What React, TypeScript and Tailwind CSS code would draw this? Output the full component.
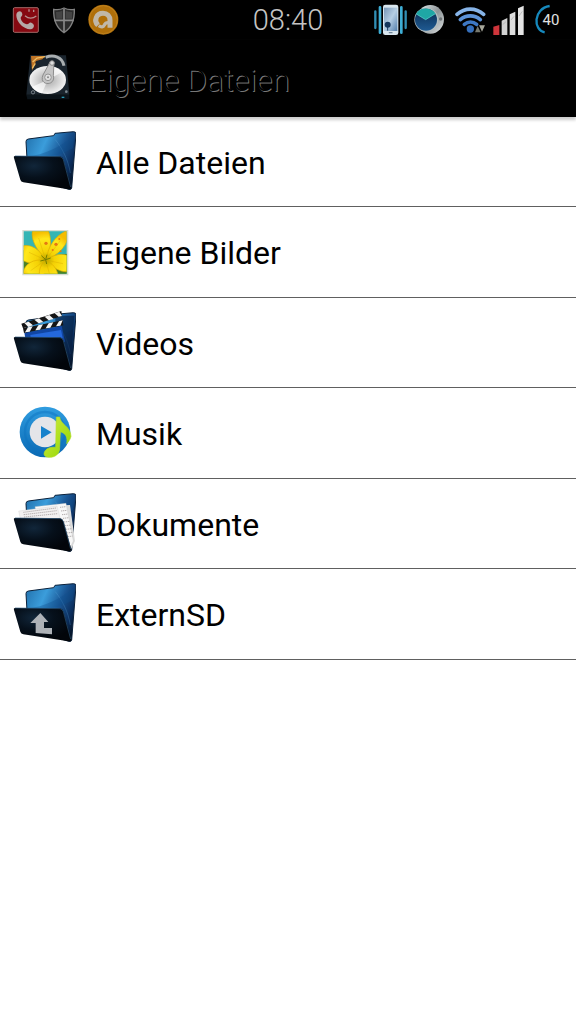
import type { ReactNode } from "react";

function StatusBar() {
  return (
    <div className="grid h-10 grid-cols-[1fr_auto_1fr] items-center bg-black px-3">
      <div className="flex items-center gap-3 opacity-80">
        <CallIcon />
        <ShieldIcon />
        <AvastIcon />
      </div>
      <time className="text-[29px] leading-10 font-light text-[#c4c4c4]">
        08:40
      </time>
      <div className="flex items-center justify-end gap-1.5">
        <VibrateIcon />
        <WatchIcon />
        <WifiIcon />
        <SignalIcon />
        <BatteryIcon />
      </div>
    </div>
  );
}

function CallIcon() {
  return (
    <svg viewBox="36 0 84 120" className="h-10 w-7" aria-hidden="true">
      <rect x="40" y="23" width="75" height="74" rx="4" fill="#a80c16" stroke="#c98280" strokeWidth="3" />
      <path
        d="M53 36c7-5 13-1 14 7 1 5-5 7-5 11 1 9 10 18 19 19 5 0 7-7 13-5 8 3 10 9 6 15-5 6-14 6-24 1C62 77 50 62 49 47c0-5 1-8 4-11Z"
        fill="#e3d2d0"
      />
      <path d="M75 47c10 9 23 9 34 1M87 28v7M101 29v7" fill="none" stroke="#e3b5b2" strokeWidth="4" />
    </svg>
  );
}

function ShieldIcon() {
  return (
    <svg viewBox="156 0 72 120" className="h-10 w-6" aria-hidden="true">
      <path
        d="M192 24c-10 5-21 6-31 4-1 34 8 56 31 70 23-14 32-36 31-70-10 2-21 1-31-4Z"
        fill="#373737"
        stroke="#a2a2a2"
        strokeWidth="4"
      />
      <path d="M192 26v70M163 61h58" stroke="#aaa" strokeWidth="5" />
      <path d="M168 36q10 0 19-4v24h-18ZM197 32q9 4 19 4v20h-19Z" fill="#555" />
    </svg>
  );
}

function AvastIcon() {
  return (
    <svg viewBox="262 0 93 120" className="h-10 w-[31px]" aria-hidden="true">
      <circle cx="308" cy="59" r="45" fill="#dc8b0c" />
      <circle cx="308" cy="59" r="42" fill="none" stroke="#eda126" strokeWidth="3" />
      <path
        d="M292 76c-14-14-5-36 15-36 13 0 21 9 21 21v22"
        fill="none"
        stroke="#f1e5d2"
        strokeWidth="15"
      />
      <path d="M294 77q12 8 17-2 3-7 12-7" fill="none" stroke="#f1e5d2" strokeWidth="10" />
    </svg>
  );
}

function VibrateIcon() {
  return (
    <svg viewBox="18 0 108 120" className="h-10 w-9" aria-hidden="true">
      <defs>
        <linearGradient id="phoneScreen" x1="0" y1="0" x2="1" y2="1">
          <stop offset="0" stopColor="#7896b7" />
          <stop offset=".5" stopColor="#b5cee4" />
          <stop offset="1" stopColor="#547fac" />
        </linearGradient>
      </defs>
      <path d="M28 34v50M119 34v50" stroke="#318eb4" strokeWidth="7" strokeLinecap="round" />
      <path d="M42 22v76M106 22v76" stroke="#3eaed5" strokeWidth="8" strokeLinecap="round" />
      <rect x="51" y="14" width="46" height="91" rx="7" fill="#d9e6ef" />
      <rect x="54" y="23" width="40" height="70" fill="url(#phoneScreen)" />
      <circle cx="65" cy="74" r="9" fill="#15365d" />
      <path d="M65 78v14" stroke="#15365d" strokeWidth="3" />
      <rect x="68" y="96" width="12" height="4" rx="2" fill="#71869a" />
    </svg>
  );
}

function WatchIcon() {
  return (
    <svg viewBox="146 0 102 120" className="h-10 w-[34px]" aria-hidden="true">
      <defs>
        <linearGradient id="watchFrame" x1="0" y1="0" x2="1" y2="1">
          <stop offset="0" stopColor="#e8f0f1" />
          <stop offset=".5" stopColor="#8d9497" />
          <stop offset="1" stopColor="#dfe3e4" />
        </linearGradient>
        <linearGradient id="watchFace" x1="0" y1="0" x2="0" y2="1">
          <stop offset="0" stopColor="#0a2c50" />
          <stop offset="1" stopColor="#1f5a92" />
        </linearGradient>
      </defs>
      <ellipse cx="195" cy="58" rx="41" ry="43" fill="url(#watchFrame)" />
      <circle cx="183" cy="59" r="36" fill="#b4bfc2" />
      <circle cx="182" cy="59" r="33" fill="url(#watchFace)" />
      <path d="M181 59 152 42c12-21 42-22 59-1Z" fill="#1fa7a5" />
      <path d="m153 42 28 17 29-18" fill="none" stroke="#5fd3cf" strokeWidth="2" />
      <circle cx="226" cy="57" r="5" fill="#6d7376" />
    </svg>
  );
}

function WifiIcon() {
  return (
    <svg viewBox="24 0 96 120" className="h-10 w-8" aria-hidden="true">
      <g fill="none" strokeLinecap="round" strokeWidth="11">
        <path d="M33 43c24-21 56-21 80 0" stroke="#86b3e7" />
        <path d="M43 59c18-15 42-15 60 0" stroke="#5c92d7" />
        <path d="M55 73c11-9 26-9 37 0" stroke="#3e78c4" />
      </g>
      <circle cx="73" cy="87" r="11" fill="#356fbc" />
      <path d="m87 97 8-19 9 19Z" fill="#77796f" />
      <path d="m99 76 9 19 9-19Z" fill="#a7a79b" />
    </svg>
  );
}

function SignalIcon() {
  return (
    <svg viewBox="137 0 102 120" className="h-10 w-[34px]" aria-hidden="true">
      <path d="m141 80 18-5v30h-18Z" fill="#cf353b" />
      <path d="m166 62 17-8v51h-17Z" fill="#d3d3d3" />
      <path d="m190 43 17-8v70h-17Z" fill="#dedede" />
      <path d="m215 25 17-8v88h-17Z" fill="#e4e4e4" />
      <path d="m169 74 10-9M194 60l9-11M218 48l10-14" stroke="#aaa" strokeWidth="2" />
    </svg>
  );
}

function BatteryIcon() {
  return (
    <svg viewBox="258 0 96 120" className="h-10 w-8" role="img">
      <path d="M311 18c-50 8-50 72-15 79" fill="none" stroke="#1689bd" strokeWidth="7" />
      <text x="315" y="76" textAnchor="middle" fontSize="45" fill="#e2e2e2">
        40
      </text>
    </svg>
  );
}

function DriveIcon() {
  return (
    <svg viewBox="72 33 144 168" className="h-14 w-12" aria-hidden="true">
      <defs>
        <radialGradient id="platter">
          <stop offset="0" stopColor="#aaa" />
          <stop offset=".45" stopColor="#c8c8c8" />
          <stop offset="1" stopColor="#f2f2f2" />
        </radialGradient>
      </defs>
      <path d="m91 45 107 1 10 118H79Z" fill="#1a242d" />
      <path d="M79 165h129v13H82Z" fill="#0b1319" />
      <path d="M93 48h43l-9 10-19 5-12 29Z" fill="#bf7426" />
      <path d="m98 66 13-12 24-4M97 85l9-15" stroke="#efbd64" strokeWidth="4" fill="none" />
      <path d="M137 52c24-9 50-1 55 25" stroke="#a9aeb0" strokeWidth="9" fill="none" />
      <ellipse cx="143" cy="120" rx="55" ry="42" fill="url(#platter)" />
      <path d="m143 120-46 20q11 18 29 20ZM143 120l42-23q-9-13-24-17Z" fill="#fff" opacity=".65" />
      <path d="m150 66-21 39c-14 34 40 34 31 1L162 66Z" fill="#c4c4c4" stroke="#8d8d8d" strokeWidth="3" />
      <circle cx="156" cy="69" r="7" fill="#ddd" stroke="#888" strokeWidth="3" />
      <circle cx="144" cy="112" r="10" fill="#e0e0e0" stroke="#959595" strokeWidth="3" />
      <circle cx="144" cy="112" r="3" fill="#888" />
      <circle cx="99" cy="157" r="5" fill="none" stroke="#a4acb2" strokeWidth="2" />
      <circle cx="199" cy="155" r="4" fill="#7c8991" />
      <path d="M185 172h8" stroke="#269bb8" strokeWidth="4" />
    </svg>
  );
}

function FolderGradients() {
  return (
    <svg className="absolute h-0 w-0" aria-hidden="true">
      <defs>
        <linearGradient id="folderBack" x1="0" y1=".2" x2="1" y2=".7">
          <stop offset="0" stopColor="#2678b4" />
          <stop offset=".3" stopColor="#3b9ddb" />
          <stop offset=".6" stopColor="#1a5796" />
          <stop offset=".85" stopColor="#0b2d5c" />
          <stop offset="1" stopColor="#051327" />
        </linearGradient>
        <radialGradient id="folderFront" cx=".35" cy=".3" r=".7">
          <stop offset="0" stopColor="#11263a" />
          <stop offset=".5" stopColor="#06101b" />
          <stop offset="1" stopColor="#02050a" />
        </radialGradient>
      </defs>
    </svg>
  );
}

function Folder({ children, overlay }: { children?: ReactNode; overlay?: ReactNode }) {
  return (
    <svg viewBox="36 31 192 192" className="h-16 w-16 shrink-0" aria-hidden="true">
      <path
        d="M78 66q0-7 7-8l76-10 4-7 56-5q7 0 7 7l-13 162q-1 6-9 4L84 170Z"
        fill="url(#folderBack)"
        stroke="#0a203a"
        strokeWidth="3"
      />
      <path d="M166 60c21 27 38 58 45 100" fill="none" stroke="#5fa8d9" strokeWidth="2" opacity=".4" />
      <path d="M83 110c51-5 91-25 139-61l-3 36c-44 26-77 30-136 25Z" fill="#0f4f90" opacity=".35" />
      {children}
      <path
        d="m44 109 136 1q8 1 11 10l23 83q-1 7-9 6L70 188q-7-1-9-8L42 115q-2-5 2-6Z"
        fill="url(#folderFront)"
      />
      <path d="m45 109 135 2q7 1 10 9l22 82" fill="none" stroke="#2b567c" strokeWidth="2" />
      {overlay}
    </svg>
  );
}

function VideoFolder() {
  return (
    <Folder>
      <path d="M165 45h58l-13 158-40-90Z" fill="#071d3c" opacity=".6" />
      <path d="m73 96 112-20 10 47H78Z" fill="#1146a4" />
      <path d="m91 103 92-15 6 29H93Z" fill="#2468dc" />
      <path d="m64 69 120-38 2 15L69 83ZM69 83l119-24 2 15-118 23Z" fill="#151515" />
      <path
        d="m73 67 13-4 13 11-14 5Zm30-10 14-4 13 11-14 4Zm31-9 14-5 13 12-15 4Zm30-10 14-5 8 13-10 2ZM75 95l9-15 14-3-9 16Zm31-6 9-15 14-3-9 16Zm31-6 9-15 14-3-9 16Zm31-6 9-15 11-3-7 16Z"
        fill="#f4f4f4"
      />
    </Folder>
  );
}

function DocumentFolder() {
  return (
    <Folder>
      <path d="m135 73 75-3 15 108-14 29Z" fill="#ddd" />
      <path d="m105 75 93-10 22 113-11 24-80-30Z" fill="#f8f8f8" stroke="#c2c2c2" />
      <path d="m56 88 115-15 27 106H75Z" fill="#f2f0f0" stroke="#cfcfcf" />
      <path
        d="m70 92 98-13M71 99l99-12M72 106l100-10M180 77l18-2M183 88l18-2M186 99l18-2M189 110l18-2M192 121l18-2M195 132l18-2M198 143l18-2M201 154l17-2M204 165l14-2"
        stroke="#b5afaf"
        strokeWidth="3"
        strokeDasharray="4 2"
      />
    </Folder>
  );
}

function ExternalFolder() {
  return (
    <Folder
      overlay={<path d="m121 124 24 27h-13v18h24v19l-49-4v-30H91Z" fill="#aeb2b7" />}
    />
  );
}

function PictureIcon() {
  return (
    <svg viewBox="36 30 192 192" className="h-16 w-16 shrink-0" aria-hidden="true">
      <defs>
        <radialGradient id="petal" gradientUnits="userSpaceOnUse" cx="138" cy="150" r="85">
          <stop offset="0" stopColor="#b5a800" />
          <stop offset=".3" stopColor="#f5d206" />
          <stop offset=".75" stopColor="#ffe81c" />
          <stop offset="1" stopColor="#f5bc00" />
        </radialGradient>
        <clipPath id="photo">
          <path d="M71 64h129v127H71Z" />
        </clipPath>
      </defs>
      <path d="M67 60h138v136H67Z" fill="#d6dcd3" />
      <g clipPath="url(#photo)">
        <path d="M70 63h132v130H70Z" fill="#35b5b4" />
        <path d="m70 120 63 25 70-14v62H70Z" fill="#4b8226" />
        <g fill="url(#petal)" stroke="#dfae00" strokeWidth="2">
          <path d="M137 150C104 112 89 81 100 55h42c15 32 12 63-5 95Z" />
          <path d="M138 151c7-45 27-74 67-92 4 40-21 70-67 92Z" />
          <path d="M137 150c-21-36-46-48-70-42v42c17 12 40 12 70 0Z" />
          <path d="M136 151c-35-5-64 8-69 45h59c14-12 18-24 10-45Z" />
          <path d="M138 150c29-20 49-19 68-13v48c-26 2-46-10-68-35Z" />
          <path d="M137 150c-16 16-21 31-18 46h55c-3-21-17-36-37-46Z" />
        </g>
        <path
          d="m137 150-21-66m21 66 44-58m-44 58-50-23m50 23-45 32m45-32 52 11m-52-11 11 40"
          stroke="#d9a900"
          strokeWidth="2"
          opacity=".6"
        />
        <path
          d="m137 149-13-12m13 12 4-15m-4 15 15-5m-15 5 3 13m-3-13-16 4"
          stroke="#727c00"
          strokeWidth="3"
        />
        <g fill="#e57813">
          <circle cx="138" cy="100" r="5" />
          <circle cx="168" cy="103" r="5" />
          <circle cx="158" cy="120" r="3" />
          <circle cx="182" cy="124" r="3" />
          <circle cx="178" cy="87" r="3" />
        </g>
      </g>
    </svg>
  );
}

function MusicIcon() {
  return (
    <svg viewBox="36 28 192 192" className="h-16 w-16 shrink-0" aria-hidden="true">
      <defs>
        <linearGradient id="disc" x1="0" y1="0" x2="0" y2="1">
          <stop offset="0" stopColor="#309de0" />
          <stop offset="1" stopColor="#0969b4" />
        </linearGradient>
        <linearGradient id="note" x1="0" y1="0" x2="1" y2="1">
          <stop offset="0" stopColor="#d3ec43" />
          <stop offset="1" stopColor="#8ed600" />
        </linearGradient>
      </defs>
      <circle cx="135" cy="121" r="76" fill="url(#disc)" />
      <circle cx="135" cy="121" r="60" fill="none" stroke="#0a71be" strokeWidth="7" opacity=".45" />
      <circle cx="135" cy="121" r="46" fill="#e4e5e9" />
      <path d="m123 103 32 19-32 19Z" fill="#1782cc" />
      <path
        d="M169 76h10c2 23 33 28 34 58-2 9-7 16-13 22 4-20-3-31-19-36l-2 48c0 20-14 30-34 29-10-1-15-7-12-15 4-11 18-17 34-15Z"
        fill="url(#note)"
        stroke="#b3dc23"
        strokeWidth="2"
      />
    </svg>
  );
}

const folders = [
  { name: "Alle Dateien", icon: <Folder /> },
  { name: "Eigene Bilder", icon: <PictureIcon /> },
  { name: "Videos", icon: <VideoFolder /> },
  { name: "Musik", icon: <MusicIcon /> },
  { name: "Dokumente", icon: <DocumentFolder /> },
  { name: "ExternSD", icon: <ExternalFolder /> },
];

function App() {
  return (
    <div className="min-h-screen bg-white font-['Roboto',sans-serif] text-black">
      <StatusBar />
      <header className="flex h-[77px] items-center gap-4 bg-black px-6 shadow-[0_3px_3px_#ccc]">
        <DriveIcon />
        <h1 className="pt-1 text-[31px] leading-10 font-light text-black [text-shadow:1px_1px_0_#777]">
          Eigene Dateien
        </h1>
      </header>
      <FolderGradients />
      <main>
        <ul>
          {folders.map(({ name, icon }) => (
            <li key={name} className="border-b border-[#606060] odd:h-[90px] even:h-[91px]">
              <button
                type="button"
                className="flex h-full w-full items-center gap-5 px-3 text-left text-[32px] leading-10"
              >
                {icon}
                <span className="pt-0.5">{name}</span>
              </button>
            </li>
          ))}
        </ul>
      </main>
    </div>
  );
}

export default App;
